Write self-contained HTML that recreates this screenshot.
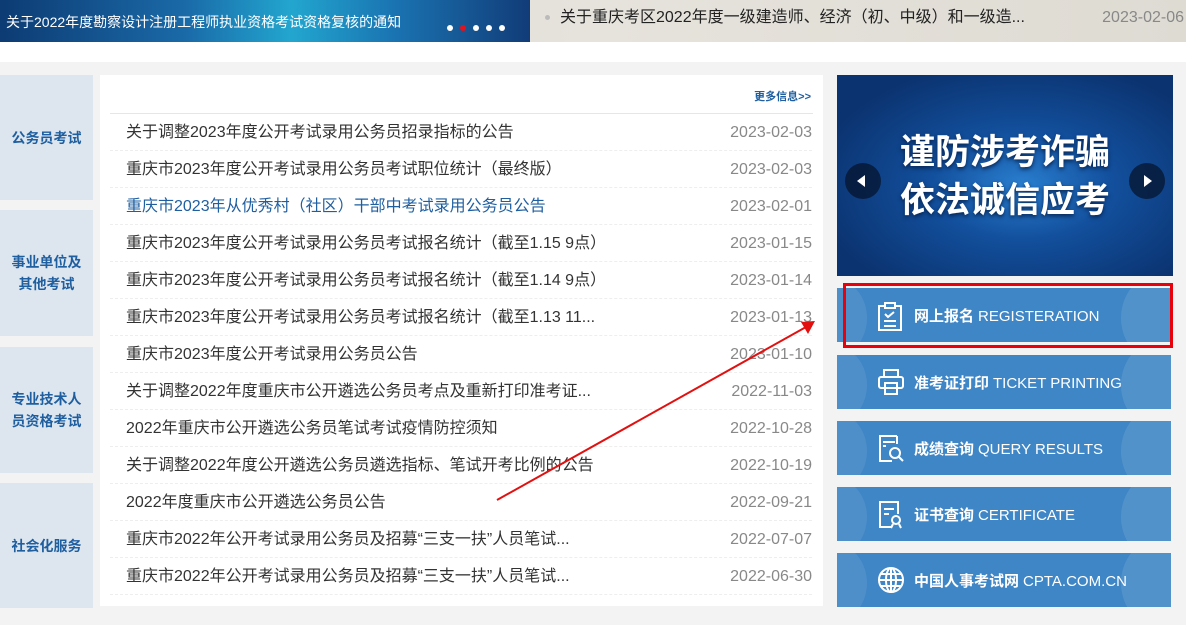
<!DOCTYPE html>
<html><head><meta charset="utf-8"><style>
*{margin:0;padding:0;box-sizing:border-box}
body{width:1186px;height:625px;background:#fff;font-family:"Liberation Sans","Noto Sans CJK SC",sans-serif;position:relative;overflow:hidden}
.top{position:absolute;left:0;top:0;width:1186px;height:42px;background:linear-gradient(90deg,#d9d9d6,#e6e3dc 50%,#dedbd3)}
.bn{position:absolute;left:0;top:0;width:530px;height:42px;background:linear-gradient(90deg,#0d3b73,#1a6aa8 35%,#22a6cf 55%,#1a72b0 75%,#113c78)}
.bn span{position:absolute;left:6px;top:12px;color:#fff;font-size:14px}
.dots{position:absolute;left:447px;top:18px}
.dots i{display:inline-block;width:6px;height:6px;border-radius:3px;background:#fff;margin-right:7px}
.tt{position:absolute;left:560px;top:8px;font-size:16px;color:#222;line-height:20px}
.td{position:absolute;right:2px;top:8px;font-size:16px;color:#888;line-height:20px}
.gray{position:absolute;left:0;top:62px;width:1186px;height:563px;background:#f3f3f3}
.tab{position:absolute;left:0;width:93px;background:#dde6ef;color:#1f5fa0;font-weight:bold;font-size:14px;text-align:center;display:flex;align-items:center;justify-content:center;line-height:22px}
.panel{position:absolute;left:100px;top:75px;width:723px;height:531px;background:#fff}
.more{position:absolute;right:12px;top:13px;font-size:11px;color:#1f5fa0;font-weight:bold}
.hl{position:absolute;left:10px;right:10px;top:38px;border-top:1px solid #e6e6e6}
.row{position:absolute;left:10px;right:11px;height:37px;border-bottom:1px dashed #eee;font-size:16px;color:#333;line-height:37px}
.row .t{position:absolute;left:16px}
.row .d{position:absolute;right:0;color:#888}
.ban{position:absolute;left:837px;top:75px;width:336px;height:201px;background:radial-gradient(ellipse at 55% 55%,#2a7fd0 0%,#124f9c 35%,#0b3370 80%);overflow:hidden}
.ban .tx{position:absolute;left:0;width:100%;text-align:center;color:#fff;font-weight:bold;font-size:35px;letter-spacing:0px;text-shadow:0 2px 4px #06224d;line-height:40px}
.arr{position:absolute;top:88px;width:36px;height:36px;border-radius:18px;background:rgba(5,20,45,.75)}
.btn{position:absolute;left:837px;width:334px;height:54px;background:#3f86c6;overflow:hidden}
.btn:before{content:"";position:absolute;left:-40px;top:-10px;width:70px;height:80px;border-radius:50%;background:rgba(255,255,255,.08)}
.btn:after{content:"";position:absolute;right:-30px;top:-15px;width:80px;height:90px;border-radius:50%;background:rgba(255,255,255,.1)}
.btn .l{position:absolute;left:77px;top:17px;color:#fff;font-size:15px;white-space:nowrap}
.btn .l b{margin-right:4px}
.btn svg{position:absolute;left:40px;top:13px}
</style></head><body>
<div class="top"></div>
<div class="bn"><span>关于2022年度勘察设计注册工程师执业资格考试资格复核的通知</span><div class="dots"><i></i><i style="background:#e0141e"></i><i></i><i></i><i></i></div></div>
<div style="position:absolute;left:545px;top:15px;width:5px;height:5px;border-radius:3px;background:#bbb"></div>
<div class="tt">关于重庆考区2022年度一级建造师、经济（初、中级）和一级造...</div>
<div class="td">2023-02-06</div>
<div class="gray"></div>
<div class="tab" style="top:75px;height:125px">公务员考试</div>
<div class="tab" style="top:210px;height:126px">事业单位及<br>其他考试</div>
<div class="tab" style="top:347px;height:126px">专业技术人<br>员资格考试</div>
<div class="tab" style="top:483px;height:125px">社会化服务</div>
<div class="panel">
<div class="more">更多信息&gt;&gt;</div><div class="hl"></div>
<div class="row" style="top:39px"><span class="t">关于调整2023年度公开考试录用公务员招录指标的公告</span><span class="d">2023-02-03</span></div>
<div class="row" style="top:76px"><span class="t">重庆市2023年度公开考试录用公务员考试职位统计（最终版）</span><span class="d">2023-02-03</span></div>
<div class="row" style="top:113px"><span class="t" style="color:#1f5fa0">重庆市2023年从优秀村（社区）干部中考试录用公务员公告</span><span class="d">2023-02-01</span></div>
<div class="row" style="top:150px"><span class="t">重庆市2023年度公开考试录用公务员考试报名统计（截至1.15 9点）</span><span class="d">2023-01-15</span></div>
<div class="row" style="top:187px"><span class="t">重庆市2023年度公开考试录用公务员考试报名统计（截至1.14 9点）</span><span class="d">2023-01-14</span></div>
<div class="row" style="top:224px"><span class="t">重庆市2023年度公开考试录用公务员考试报名统计（截至1.13 11...</span><span class="d">2023-01-13</span></div>
<div class="row" style="top:261px"><span class="t">重庆市2023年度公开考试录用公务员公告</span><span class="d">2023-01-10</span></div>
<div class="row" style="top:298px"><span class="t">关于调整2022年度重庆市公开遴选公务员考点及重新打印准考证...</span><span class="d">2022-11-03</span></div>
<div class="row" style="top:335px"><span class="t">2022年重庆市公开遴选公务员笔试考试疫情防控须知</span><span class="d">2022-10-28</span></div>
<div class="row" style="top:372px"><span class="t">关于调整2022年度公开遴选公务员遴选指标、笔试开考比例的公告</span><span class="d">2022-10-19</span></div>
<div class="row" style="top:409px"><span class="t">2022年度重庆市公开遴选公务员公告</span><span class="d">2022-09-21</span></div>
<div class="row" style="top:446px"><span class="t">重庆市2022年公开考试录用公务员及招募“三支一扶”人员笔试...</span><span class="d">2022-07-07</span></div>
<div class="row" style="top:483px"><span class="t">重庆市2022年公开考试录用公务员及招募“三支一扶”人员笔试...</span><span class="d">2022-06-30</span></div>
</div>
<div class="ban">
<div class="tx" style="top:58px">谨防涉考诈骗</div>
<div class="tx" style="top:106px">依法诚信应考</div>
<div class="arr" style="left:8px"><div style="position:absolute;left:12px;top:12px;border:6px solid transparent;border-right:8px solid #fff;border-left:0"></div></div>
<div class="arr" style="left:292px"><div style="position:absolute;left:15px;top:12px;border:6px solid transparent;border-left:8px solid #fff;border-right:0"></div></div>
</div>
<div class="btn" style="top:288px"><svg width="26" height="30" viewBox="0 0 26 30" fill="none" stroke="#fff" stroke-width="2"><rect x="2" y="5" width="22" height="24"/><rect x="8" y="2" width="10" height="5" fill="#3f86c6"/><path d="M8 13l3 3 6-5M7 20h12M7 25h12"/></svg><span class="l"><b>网上报名</b>REGISTERATION</span></div>
<div class="btn" style="top:355px"><svg width="28" height="28" viewBox="0 0 28 28" fill="none" stroke="#fff" stroke-width="2"><rect x="7" y="2" width="14" height="7"/><rect x="2" y="9" width="24" height="11" rx="2"/><rect x="8" y="15" width="12" height="11"/></svg><span class="l"><b>准考证打印</b>TICKET PRINTING</span></div>
<div class="btn" style="top:421px"><svg width="28" height="30" viewBox="0 0 28 30" fill="none" stroke="#fff" stroke-width="2"><path d="M20 2H3v25h12M20 2v8"/><path d="M6 8h12M6 12h3"/><circle cx="18" cy="19" r="5"/><path d="M22 23l4 4"/></svg><span class="l"><b>成绩查询</b>QUERY RESULTS</span></div>
<div class="btn" style="top:487px"><svg width="28" height="30" viewBox="0 0 28 30" fill="none" stroke="#fff" stroke-width="2"><path d="M14 27H3V2h18v12"/><path d="M7 9h10M7 14h5"/><circle cx="19" cy="20" r="4"/><path d="M16 24l-2 4M22 24l2 4"/></svg><span class="l"><b>证书查询</b>CERTIFICATE</span></div>
<div class="btn" style="top:553px"><svg width="28" height="28" viewBox="0 0 28 28" fill="none" stroke="#fff" stroke-width="2"><circle cx="14" cy="14" r="12"/><ellipse cx="14" cy="14" rx="5" ry="12"/><path d="M2 14h24M4 8h20M4 20h20M14 2v24"/></svg><span class="l"><b>中国人事考试网</b>CPTA.COM.CN</span></div>
<div style="position:absolute;left:843px;top:283px;width:330px;height:65px;border:3px solid #e8000b"></div>
<svg style="position:absolute;left:0;top:0" width="1186" height="625"><line x1="497" y1="500" x2="806" y2="327" stroke="#e31010" stroke-width="2"/><polygon points="815,321 801,322 808,334" fill="#e31010"/></svg>
</body></html>
